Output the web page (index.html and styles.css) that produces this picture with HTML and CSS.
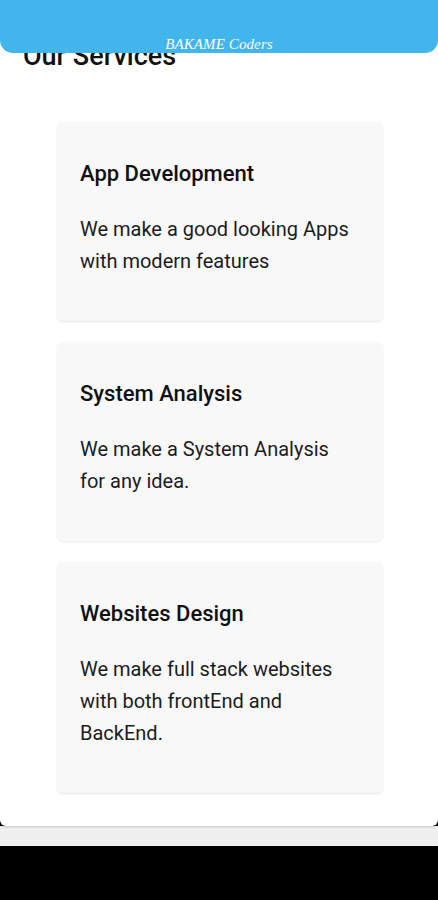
FILE: index.html
```html
<!DOCTYPE html>
<html>
<head>
<meta charset="utf-8">
<link rel="stylesheet" href="styles.css">
</head>
<body>
<div class="screen">
  <header class="appbar"><span class="brand">BAKAME Coders</span></header>
  <main class="panel">
    <h1 class="heading">Our Services</h1>
    <div class="cards">
      <section class="card">
        <h2 class="card-title">App Development</h2>
        <p class="card-text">We make a good looking Apps with modern features</p>
      </section>
      <section class="card">
        <h2 class="card-title">System Analysis</h2>
        <p class="card-text">We make a System Analysis for any idea.</p>
      </section>
      <section class="card">
        <h2 class="card-title">Websites Design</h2>
        <p class="card-text">We make full stack websites with both frontEnd and BackEnd.</p>
      </section>
    </div>
  </main>
  <div class="strip"></div>
</div>
</body>
</html>
```
FILE: styles.css
```css
html, body {
  margin: 0;
  padding: 0;
  background: #000;
}
.screen {
  position: relative;
  width: 438px;
  font-family: Roboto, "Noto Sans", sans-serif;
}
.appbar {
  position: absolute;
  top: 0;
  left: 0;
  right: 0;
  height: 53px;
  background: #42b5eb;
  border-radius: 0 0 13px 13px;
  display: flex;
  justify-content: center;
  align-items: flex-end;
  z-index: 2;
}
.brand {
  color: #fff;
  font-family: "Liberation Serif", serif;
  font-style: italic;
  font-size: 15px;
  letter-spacing: 0.1px;
  line-height: 18px;
  margin-bottom: 0;
}
.panel {
  background: #fff;
  height: 826px;
  box-sizing: border-box;
  padding: 40px 0 33px;
  border-radius: 0 0 6px 6px;
  box-shadow: 0 1px 3px rgba(0,0,0,0.18);
  position: relative;
  z-index: 1;
}
.heading {
  margin: 0 0 0 23px;
  font-size: 27px;
  line-height: 32px;
  font-weight: 500;
  color: #111;
}
.cards {
  margin: 50px 55px 0 57px;
  display: flex;
  flex-direction: column;
  gap: 21px;
}
.card {
  background: #f8f8f8;
  border-radius: 6px;
  padding: 39px 30px 44px 23px;
  box-shadow: 0 1px 2px rgba(0,0,0,0.10);
}
.card-title {
  margin: 0;
  font-size: 22px;
  line-height: 26px;
  font-weight: 500;
  color: #111;
}
.card-text {
  margin: 26px 0 0;
  font-size: 20px;
  line-height: 32px;
  color: #1c1c1c;
}
.strip {
  height: 20px;
  background: #f0f0f0;
}
```
